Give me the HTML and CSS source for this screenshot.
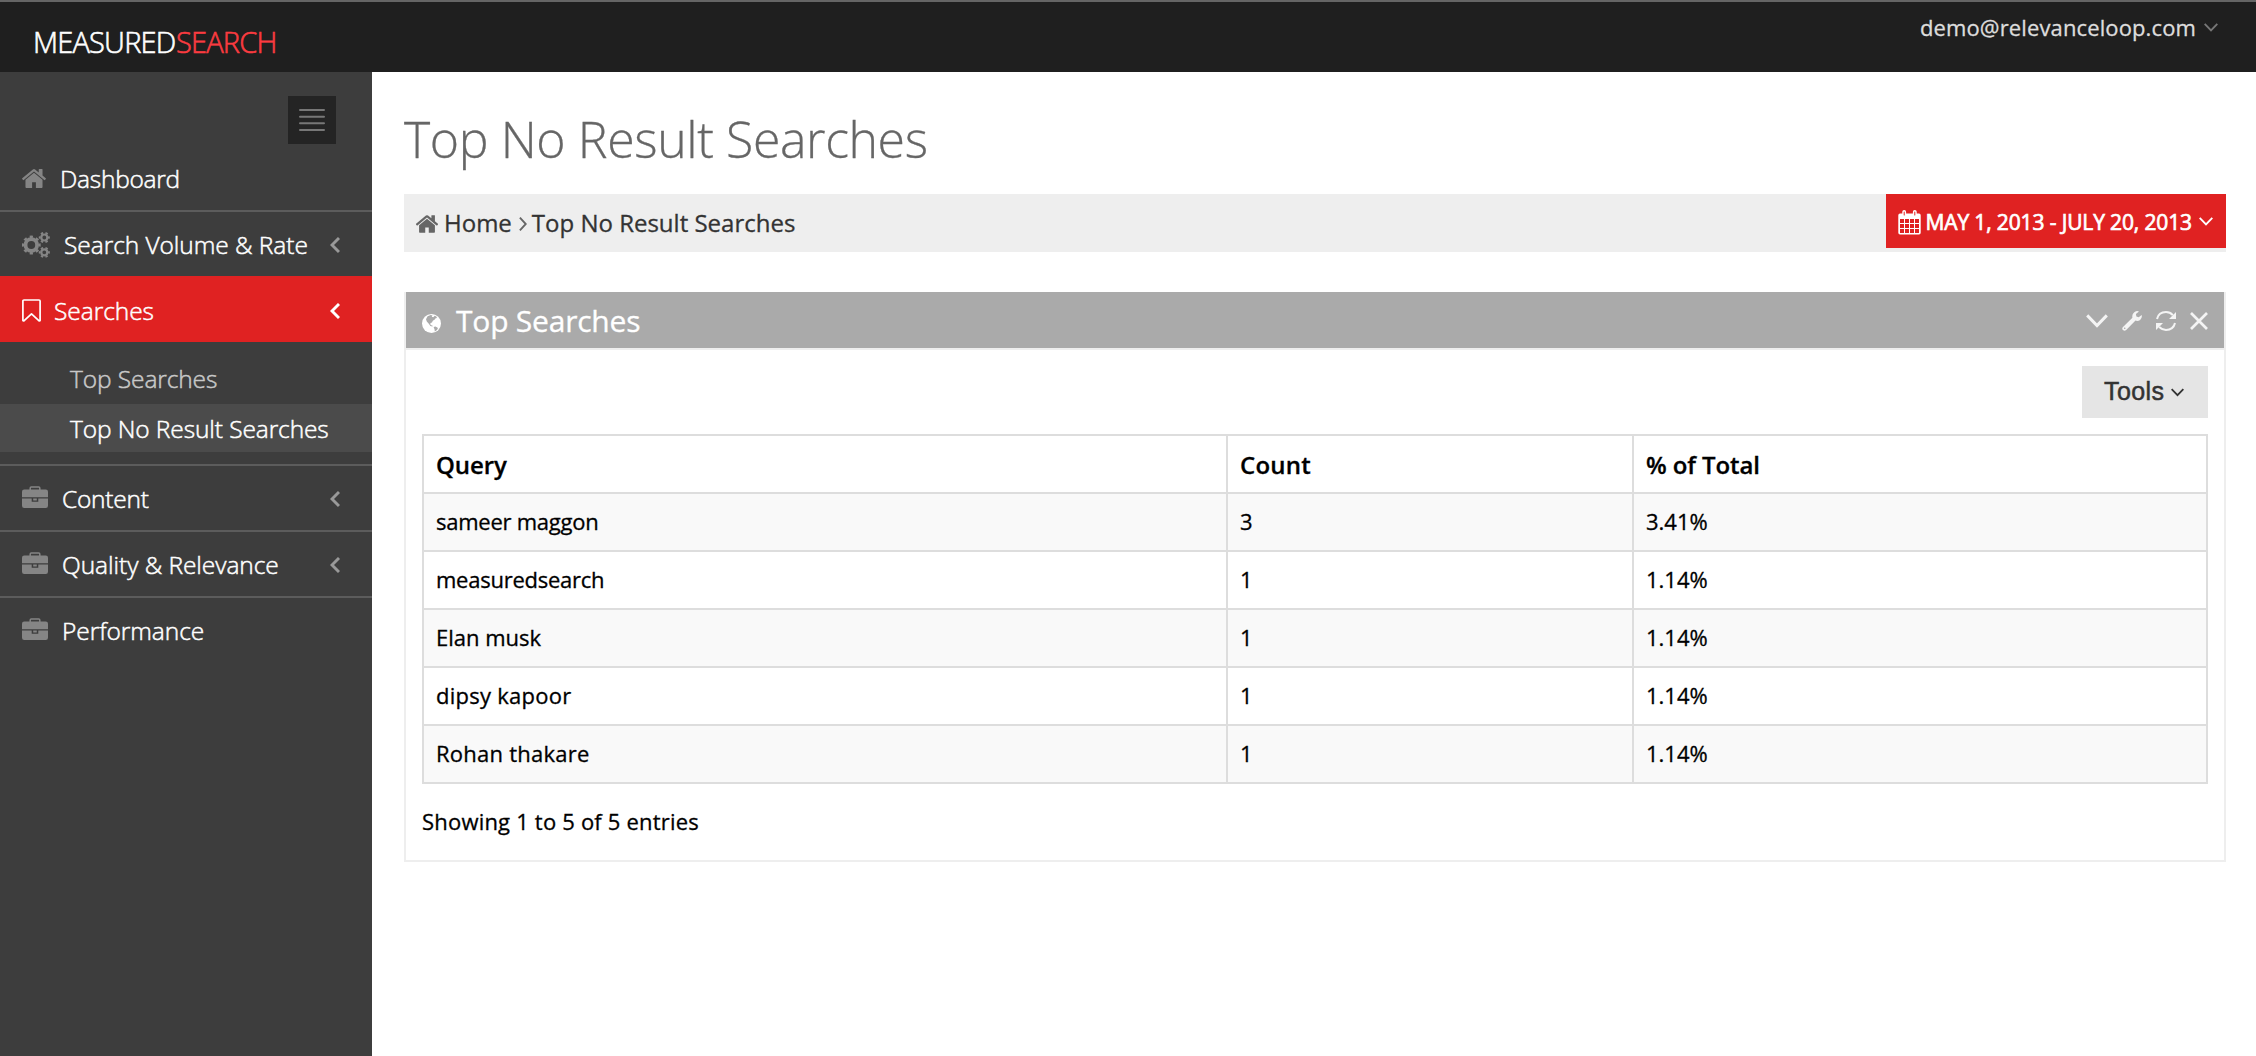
FILE: index.html
```html
<!DOCTYPE html>
<html lang="en">
<head>
<meta charset="utf-8">
<title>Top No Result Searches</title>
<link rel="stylesheet" href="styles.css">
</head>
<body>
<svg class="sprite" aria-hidden="true">
  <symbol id="home" viewBox="96 253 1600 1283"><path fill="currentColor" d="M1472 992v480q0 26-19 45t-45 19h-384v-384h-256v384h-384q-26 0-45-19t-19-45v-480q0-1 .5-3t.5-3l575-474 575 474q1 2 1 6zm223-69l-62 74q-8 9-21 11h-3q-13 0-21-7l-692-577-692 577q-12 8-24 7-13-2-21-11l-62-74q-8-10-7-23.500t11-21.500l719-599q32-26 76-26t76 26l244 204v-195q0-14 9-23t23-9h192q14 0 23 9t9 23v408l219 182q10 8 11 21.500t-7 23.500z"/></symbol>
  <symbol id="briefcase" viewBox="0 0 26 22">
    <path fill="none" stroke="currentColor" stroke-width="1.500" d="M8.200 4V2q0-1 1-1h7.600q1 0 1 1v2"/>
    <path fill="currentColor" d="M2.200 3.500h21.600a2.200 2.200 0 0 1 2.200 2.200V11.300H0V5.700a2.200 2.200 0 0 1 2.200-2.200zM0 12.600h9.700v3.200h6.600v-3.200H26v7.200a2.200 2.200 0 0 1-2.200 2.200H2.200A2.200 2.200 0 0 1 0 19.800zM11.200 12.600h3.600v1.900h-3.600z"/>
  </symbol>
  <symbol id="cogs" viewBox="0 0 28 26">
    <g fill="none" stroke="currentColor">
      <circle cx="9.300" cy="13" r="5.800" stroke-width="3.800"/>
      <circle cx="9.300" cy="13" r="8.200" stroke-width="2.400" pathLength="16" stroke-dasharray="1 1" stroke-dashoffset=".5"/>
      <circle cx="22.300" cy="5.500" r="3" stroke-width="2.200"/>
      <circle cx="22.300" cy="5.500" r="4.600" stroke-width="1.900" pathLength="12" stroke-dasharray="1 1" stroke-dashoffset=".5"/>
      <circle cx="22.300" cy="20.300" r="3" stroke-width="2.200"/>
      <circle cx="22.300" cy="20.300" r="4.600" stroke-width="1.900" pathLength="12" stroke-dasharray="1 1" stroke-dashoffset=".5"/>
    </g>
  </symbol>
  <symbol id="bookmark" viewBox="0 0 19 23"><path fill="none" stroke="currentColor" stroke-width="1.700" stroke-linejoin="round" d="M2 1h15q1.100 0 1.100 1.100V21.600l-1 .3L9.500 14.800 1.900 21.900l-1-.3V2.100Q.9 1 2 1z"/></symbol>
  <symbol id="left" viewBox="0 0 10 16"><path fill="none" stroke="currentColor" stroke-width="2.900" d="M9 1L2 8l7 7"/></symbol>
  <symbol id="down" viewBox="0 0 14 9"><path fill="none" stroke="currentColor" stroke-width="1.900" d="M.7.900L7 7.400 13.300.9"/></symbol>
  <symbol id="right" viewBox="0 0 8 14"><path fill="none" stroke="currentColor" stroke-width="1.900" d="M.9.700L6.800 7 .9 13.300"/></symbol>
  <symbol id="bars" viewBox="0 0 26 22"><path fill="none" stroke="currentColor" stroke-width="2" stroke-linecap="round" d="M1 1h24M1 7.700h24M1 14.300h24M1 21h24"/></symbol>
  <symbol id="calendar" viewBox="0 0 23 25">
    <path fill="currentColor" fill-rule="evenodd" d="M2 3.500h19a1.700 1.700 0 0 1 1.700 1.700v17.600a1.700 1.700 0 0 1-1.700 1.700H2a1.700 1.700 0 0 1-1.700-1.700V5.200A1.700 1.700 0 0 1 2 3.500zM2 9v4h4V9zm5 0v4h4V9zm5 0v4h4V9zm5 0v4h4V9zM2 14v4h4v-4zm5 0v4h4v-4zm5 0v4h4v-4zm5 0v4h4v-4zM2 19v4h4v-4zm5 0v4h4v-4zm5 0v4h4v-4zm5 0v4h4v-4z"/>
    <path fill="#e02222" stroke="currentColor" stroke-width="1.400" d="M5 2q0-1.300 1.200-1.300T7.400 2v3q0 1.300-1.200 1.300T5 5zM15.600 2q0-1.300 1.200-1.300T18 2v3q0 1.300-1.200 1.300T15.600 5z"/>
  </symbol>
  <symbol id="globe" viewBox="0 0 19 19">
    <circle cx="9.500" cy="9.500" r="9.500" fill="#fff"/>
    <path fill="#aaa" d="M5.600 2.200L8.700 1l1.800.5-.8 1.300 1.600.4 1.400-1.500 1.600.8.700 1.500-1.400.2-.8 1.300-2 1.300-.8 1.700-1.500.6-.2 1.400 1.500 1 1 .2-.4.8-2-.6L6.800 9.800 4.800 7.500l-.8-2.300zM11.600 13l1.900-.4 2.500 1.300-1 2-2.200 1.500-.3-2.200z"/>
  </symbol>
  <symbol id="wrench" viewBox="0 0 20 20"><path fill="currentColor" d="M13.900.300Q15.400-.3 17 .4L13.900 3l.5 2.400 2.300.8 3-2.300q.7 3.300-1.600 5-2.200 1.600-4.600.7L4.200 19q-1.700 1.500-3.200.1T1 16L10.400 6.800Q9.600 2.300 13.900.3zM2.700 16.400a.8.800 0 1 0 .1 1.600.8.800 0 0 0-.1-1.600z"/></symbol>
  <symbol id="refresh" viewBox="0 0 20 20">
    <path fill="none" stroke="currentColor" stroke-width="2" d="M1 8Q2.600 1.200 10 1.100q4 0 6.800 3M19 12q-1.600 6.800-9 6.900-4 0-6.800-3"/>
    <path fill="currentColor" d="M20 1v7h-7zM0 19v-7h7z"/>
  </symbol>
  <symbol id="close" viewBox="0 0 18 18"><path fill="none" stroke="currentColor" stroke-width="2.700" d="M1 1l16 16M17 1L1 17"/></symbol>
</svg>

<header class="topbar">
  <div class="logo"><span>MEASURED</span><span class="logo-accent">SEARCH</span></div>
  <div class="user"><span>demo@relevanceloop.com</span><svg class="user-caret"><use href="#down"/></svg></div>
</header>

<div class="layout">
  <nav class="sidebar">
    <div class="toggler"><svg><use href="#bars"/></svg></div>
    <a class="item first"><svg class="i-home"><use href="#home"/></svg><span class="tight">Dashboard</span></a>
    <a class="item"><svg class="i-cogs"><use href="#cogs"/></svg><span>Search Volume &amp; Rate</span><svg class="arrow"><use href="#left"/></svg></a>
    <a class="item active"><svg class="i-bookmark"><use href="#bookmark"/></svg><span>Searches</span><svg class="arrow"><use href="#left"/></svg></a>
    <div class="submenu">
      <a class="subitem">Top Searches</a>
      <a class="subitem current">Top No Result Searches</a>
    </div>
    <a class="item"><svg class="i-case"><use href="#briefcase"/></svg><span class="tight">Content</span><svg class="arrow"><use href="#left"/></svg></a>
    <a class="item"><svg class="i-case"><use href="#briefcase"/></svg><span>Quality &amp; Relevance</span><svg class="arrow"><use href="#left"/></svg></a>
    <a class="item"><svg class="i-case"><use href="#briefcase"/></svg><span>Performance</span></a>
  </nav>

  <main class="content">
    <h1 class="title">Top No Result Searches</h1>
    <div class="breadcrumb">
      <div class="crumbs">
        <svg class="crumb-home"><use href="#home"/></svg>
        <span>Home</span>
        <svg class="crumb-sep"><use href="#right"/></svg>
        <span>Top No Result Searches</span>
      </div>
      <div class="daterange"><svg class="cal"><use href="#calendar"/></svg><span>MAY 1, 2013 - JULY 20, 2013</span><svg class="caret"><use href="#down"/></svg></div>
    </div>

    <section class="portlet">
      <div class="portlet-head">
        <svg class="globe"><use href="#globe"/></svg>
        <h2>Top Searches</h2>
        <div class="actions">
          <svg class="a-down"><use href="#down"/></svg>
          <svg class="a-wrench"><use href="#wrench"/></svg>
          <svg class="a-refresh"><use href="#refresh"/></svg>
          <svg class="a-close"><use href="#close"/></svg>
        </div>
      </div>
      <div class="portlet-body">
        <button class="tools"><span>Tools</span><svg><use href="#down"/></svg></button>
        <table class="grid">
          <colgroup><col class="c-query"><col class="c-count"><col class="c-total"></colgroup>
          <thead><tr><th>Query</th><th class="count">Count</th><th>% of Total</th></tr></thead>
          <tbody>
            <tr><td class="tight">sameer maggon</td><td>3</td><td>3.41%</td></tr>
            <tr><td class="tight">measuredsearch</td><td>1</td><td>1.14%</td></tr>
            <tr><td>Elan musk</td><td>1</td><td>1.14%</td></tr>
            <tr><td class="loose">dipsy kapoor</td><td>1</td><td>1.14%</td></tr>
            <tr><td class="loose">Rohan thakare</td><td>1</td><td>1.14%</td></tr>
          </tbody>
        </table>
        <div class="info">Showing 1 to 5 of 5 entries</div>
      </div>
    </section>
  </main>
</div>
</body>
</html>
```
FILE: styles.css
```css
* { box-sizing: border-box; }
body {
  margin: 0;
  min-height: 100vh;
  display: flex;
  flex-direction: column;
  background: #fff;
  color: #000;
  font-family: "Open Sans", "Noto Sans", sans-serif;
  font-size: 22px;
  -webkit-text-stroke: 0.3px;
}
svg { display: block; flex: none; }
.sprite { display: none; }

/* Top bar */
.topbar {
  height: 72px;
  background: #1f1f1f;
  border-top: 2px solid #656565;
  display: flex;
  justify-content: space-between;
  align-items: flex-start;
  padding: 0 38px 0 33px;
}
.logo {
  padding-top: 20px;
  font-size: 29px;
  line-height: 40px;
  font-weight: 300;
  letter-spacing: -0.8px;
  color: #fff;
  -webkit-text-stroke: 0.6px;
}
.logo-accent { color: #fb3b40; margin-left: .5px; }
.user {
  display: flex;
  align-items: center;
  padding-top: 10px;
  line-height: 30px;
  letter-spacing: 0.12px;
  color: #ddd;
}
.user-caret { width: 14px; height: 9px; margin: 0 0 0 8px; color: #777; }

/* Sidebar */
.layout { flex: 1; display: flex; }
.sidebar {
  width: 372px;
  flex: none;
  background: #3d3d3d;
  color: #fff;
  font-weight: 300;
  font-size: 24.5px;
  line-height: 33px;
  letter-spacing: -0.05px;
  -webkit-text-stroke: 0.5px;
}
.toggler {
  width: 48px;
  height: 48px;
  margin: 24px 36px 0 auto;
  display: grid;
  place-items: center;
  background: #242424;
  color: #777;
}
.toggler svg { width: 26px; height: 22px; }
.item {
  height: 66px;
  border-top: 2px solid #5c5c5c;
  display: flex;
  align-items: center;
  padding: 1px 32px 0 22px;
}
.item span { margin-left: 14px; }
.item.first { border-top-color: transparent; }
.item.active { background: #e02222; border-color: #e02222; }
.item svg { color: #858585; }
.item .arrow { width: 10px; height: 16px; margin-left: auto; color: #999; }
.item.active svg { color: #fff; }
.item.active span { margin-left: 13px; }
.item .tight { letter-spacing: -0.25px; }
.i-home { width: 24px; height: 19px; }
.i-cogs { width: 28px; height: 26px; }
.i-bookmark { width: 19px; height: 23px; }
.i-case { width: 26px; height: 22px; margin-bottom: 3px; }
.submenu { padding: 12px 0; display: grid; gap: 2px; }
.subitem { height: 48px; padding: 8px 0 0 70px; letter-spacing: -0.1px; color: #c8c8c8; }
.subitem.current { background: #4b4b4b; color: #fff; }

/* Content */
.content { flex: 1; padding: 33px 30px 0 32px; }
.title {
  margin: 0 0 21px;
  font-size: 50px;
  line-height: 68px;
  font-weight: 300;
  letter-spacing: -0.4px;
  color: #666;
}
.breadcrumb {
  height: 58px;
  display: flex;
  justify-content: space-between;
  align-items: flex-start;
  background: #eee;
}
.crumbs {
  height: 58px;
  display: flex;
  align-items: center;
  padding: 0 0 1px 12px;
  font-size: 24px;
  line-height: 33px;
  color: #333;
}
.crumb-home { width: 22px; height: 18px; margin: 2px 6px 0 0; color: #666; }
.crumb-sep { width: 8px; height: 14px; margin: 3px 5px 0 7px; color: #666; }
.daterange {
  height: 54px;
  width: 340px;
  display: flex;
  align-items: center;
  padding: 2px 13px 0 12px;
  background: #e02222;
  color: #fff;
  font-size: 21px;
  line-height: 28px;
  letter-spacing: -0.13px;
  white-space: nowrap;
  -webkit-text-stroke: 0.7px;
}
.cal { width: 23px; height: 25px; margin-right: 4.5px; }
.caret { width: 14px; height: 9px; margin: 0 0 2px auto; }

/* Portlet */
.portlet { margin-top: 40px; border: 2px solid #eee; border-top: 0; }
.portlet-head {
  height: 58px;
  border-bottom: 2px solid #eee;
  background: #aaa;
  background-clip: padding-box;
  display: flex;
  align-items: center;
  padding: 1px 16px 0;
  color: #fff;
}
.portlet-head h2 { margin: 0; font-size: 30px; line-height: 41px; font-weight: 400; letter-spacing: -0.22px; }
.globe { width: 19px; height: 19px; margin: 6px 15px 0 0; }
.actions { margin-left: auto; display: flex; align-items: center; gap: 14px; color: #f4f4f4; }
.a-down { width: 22px; height: 14px; }
.a-wrench, .a-refresh { width: 20px; height: 20px; }
.a-close { width: 18px; height: 18px; }
.portlet-body { padding: 16px 16px 24px; }
.tools {
  display: flex;
  align-items: center;
  width: 126px;
  height: 52px;
  margin: 0 0 16px auto;
  padding: 0 24px 2px 22px;
  border: 0;
  background: #e5e5e5;
  color: #333;
  font: 25px/28px "Liberation Sans", Arial, sans-serif;
  letter-spacing: 0.4px;
  -webkit-text-stroke: 0.5px;
}
.tools svg { width: 13px; height: 9px; margin: 3px 0 0 auto; }

/* Results table: the 2px gaps show the line colour underneath */
.grid { width: 100%; table-layout: fixed; border-collapse: separate; border-spacing: 2px; background: #ddd; }
.c-query { width: 802px; }
.c-count { width: 404px; }
.c-total { width: 572px; }
.grid th { height: 56px; padding: 12px 12px 11px; text-align: left; font-size: 24px; line-height: 33px; font-weight: 600; letter-spacing: -0.1px; background: #fff; }
.grid .count { letter-spacing: 0.25px; }
.grid td { height: 56px; padding: 12px 12px 14px; line-height: 30px; background: #fff; }
.grid tr:nth-child(odd) td { background: #f9f9f9; }
.grid .tight { letter-spacing: -0.25px; }
.grid .loose { letter-spacing: 0.25px; }
.info { margin-top: 22px; line-height: 30px; letter-spacing: 0.2px; }
```
